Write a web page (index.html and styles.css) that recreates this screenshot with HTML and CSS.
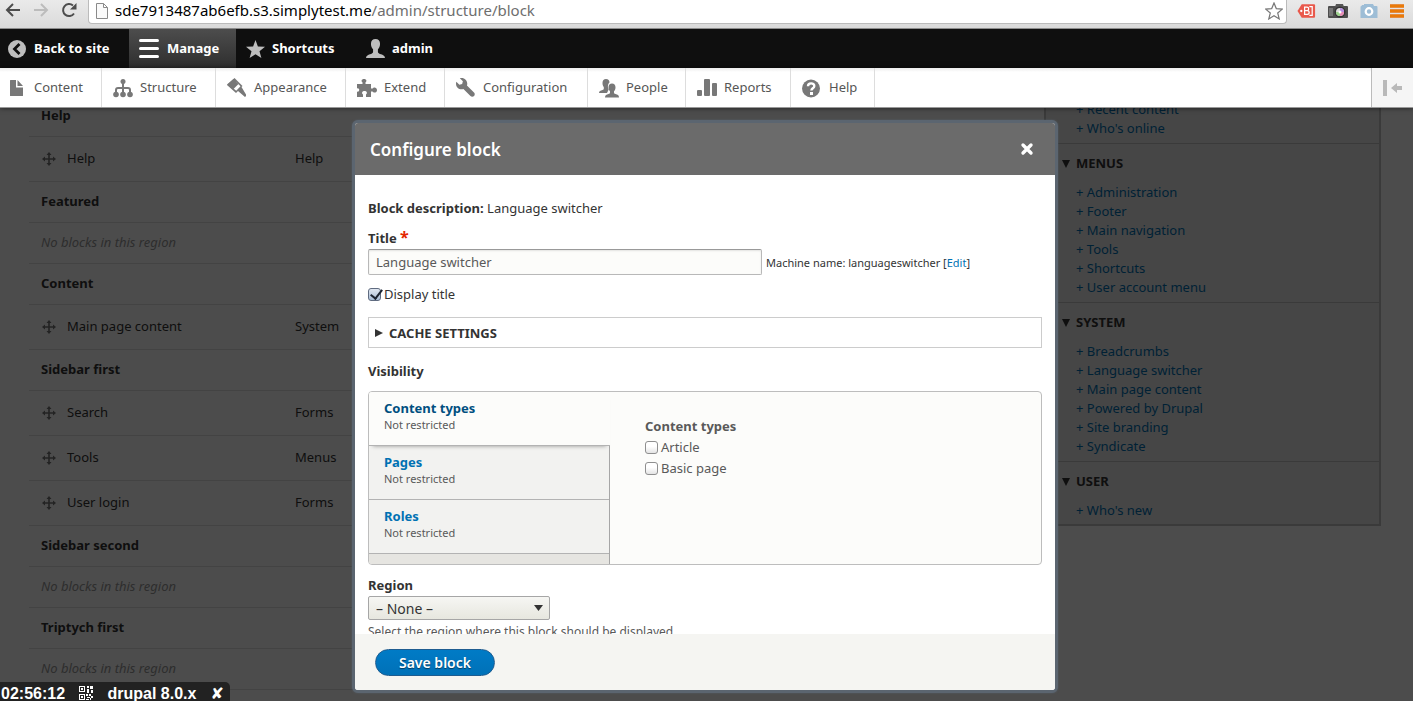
FILE: index.html
```
<!DOCTYPE html>
<html lang="en">
<head>
    <meta charset="UTF-8">
    <meta name="viewport" content="width=device-width, initial-scale=1.0">
    <title>Block layout | Drupal 8</title>
    <link rel="stylesheet" href="styles.css">
</head>
<body>
    <!-- Shared icons -->
    <svg class="sprite" aria-hidden="true">
        <symbol id="move" viewBox="0 0 14 14">
            <path d="M7 0l2.500 3H7.800v3.200H11V4.500L14 7l-3 2.500V7.800H7.800V11h1.700L7 14l-2.500-3h1.700V7.800H3v1.700L0 7l3-2.500v1.700h3.200V3H4.500z"/>
        </symbol>
        <symbol id="person" viewBox="0 0 18 18">
            <path d="M9 0C6.300 0 4.700 1.800 4.700 4.500c0 2.300.800 4.200 2 5.300v2.600c0 .900-.700 1.300-1.900 1.700C2 14.800 0 15.600 0 18h18c0-2.400-2-3.200-4.800-3.900-1.200-.400-1.900-.800-1.900-1.700V9.800c1.200-1.100 2-3 2-5.300C13.300 1.800 11.700 0 9 0z"/>
        </symbol>
    </svg>

    <!-- Browser bar -->
    <div class="browser">
        <div class="browser-nav">
            <button type="button" aria-label="Back"><svg width="16" height="16" viewBox="0 0 16 16" class="dark"><path d="M15 8H2M8 2L2 8l6 6"/></svg></button>
            <button type="button" aria-label="Forward"><svg width="16" height="16" viewBox="0 0 16 16" class="faded"><path d="M1 8h13M8 2l6 6-6 6"/></svg></button>
            <button type="button" aria-label="Reload"><svg width="16" height="16" viewBox="0 0 16 16" class="dark"><path d="M13 11.500A6 6 0 1 1 12 3.500"/><path d="M15.500 1v6.500H9z" class="solid"/></svg></button>
        </div>
        <div class="address">
            <svg width="12" height="16" viewBox="0 0 12 16"><path d="M.5.5h7l4 4v11H.5zM7.500.5v4h4" fill="#fafafa" stroke="#8a8a8a"/></svg>
            <div class="url">sde7913487ab6efb.s3.simplytest.me<span>/admin/structure/block</span></div>
            <svg width="18" height="18" viewBox="0 0 18 18"><path d="M9 1l2.300 5.600 6 .5-4.600 3.900 1.500 5.900L9 13.700l-5.200 3.200L5.300 11 .7 7.100l6-.5z" fill="#fff" stroke="#777" stroke-width="1.200"/></svg>
        </div>
        <div class="extensions">
            <svg width="19" height="16" viewBox="0 0 20 16"><path d="M5 1h13a1 1 0 0 1 1 1v12a1 1 0 0 1-1 1H5L.5 8z" fill="#e9584b"/><path d="M8 4h2.500a1.800 1.800 0 0 1 0 3.600H8zM8 7.600h2.800a2 2 0 0 1 0 4H8zM13 3.500h3v9h-3" fill="none" stroke="#fff" stroke-width="1.300"/><circle cx="4.500" cy="8" r="1.200" fill="#fff"/></svg>
            <svg width="20" height="16" viewBox="0 0 20 16"><rect x="0" y="3" width="20" height="12" rx="1" fill="#4d4d4d"/><path d="M8 1h7l1 3H7z" fill="#555"/><path d="M1 5h4v8H1z" fill="#777"/><circle cx="12" cy="9" r="5.500" fill="#333"/><circle cx="12" cy="9" r="4" fill="#ddd"/><path d="M12 9V5a4 4 0 0 1 4 4z" fill="#b58be0"/><path d="M12 9h4a4 4 0 0 1-4 4z" fill="#e88bb4"/><path d="M12 9v4a4 4 0 0 1-4-4z" fill="#9bd38a"/><circle cx="12" cy="9" r="1.500" fill="#fff"/></svg>
            <svg width="18" height="16" viewBox="0 0 18 16"><path d="M2 2h2V1h3v1-1h6l1 2h2.500a1 1 0 0 1 1 1v11h-17V4a1 1 0 0 1 1-1z" fill="#9dbdd6"/><circle cx="9" cy="8.500" r="3.300" fill="none" stroke="#fff" stroke-width="2.200"/></svg>
            <svg width="14" height="14" viewBox="0 0 14 14"><path d="M0 2h14M0 7h14M0 12h14" stroke="#f59a00" stroke-width="3"/><path d="M0 1h14M0 3h14M0 6h14M0 8h14M0 11h14M0 13h14" stroke="#dd5a10" stroke-width="1"/></svg>
        </div>
    </div>

    <!-- Admin toolbar -->
    <nav class="toolbar">
        <a href="#" class="tab-back">
            <svg width="18" height="18" viewBox="0 0 18 18"><circle cx="9" cy="9" r="9"/><path d="M11.500 4L6.500 9l5 5" fill="none" stroke="#0f0f0f" stroke-width="2.800"/></svg>
            Back to site
        </a>
        <a href="#" class="tab-manage active">
            <svg width="20" height="19" viewBox="0 0 20 19"><path d="M1.500 1.500h17M1.500 9.500h17M1.500 17.500h17" stroke="#fff" stroke-width="3" stroke-linecap="round"/></svg>
            Manage
        </a>
        <a href="#" class="tab-shortcuts">
            <svg width="19" height="18" viewBox="0 0 19 18"><path d="M9.500 0l2.400 6.400 7.100.4-5.500 4.500L15.400 18l-5.900-3.800L3.600 18l1.900-6.700L0 6.800l7.100-.4z"/></svg>
            Shortcuts
        </a>
        <a href="#" class="tab-user">
            <svg width="19" height="19"><use href="#person"/></svg>
            admin
        </a>
    </nav>

    <!-- Menu tray -->
    <nav class="tray">
        <a href="#" class="m-content"><svg width="20" height="20" viewBox="0 0 20 20"><path d="M0 2.500A.5.5 0 0 1 .5 2H6v7.500h7v8a.5.5 0 0 1-.5.5H.5a.5.5 0 0 1-.5-.5zM7.500 2L13 8H7.500z"/></svg>Content</a>
        <a href="#" class="m-structure"><svg width="20" height="20" viewBox="0 0 20 20"><circle cx="10" cy="3.500" r="2.500"/><path d="M10 5v11M3 16v-4q0-2 2-2h10q2 0 2 2v4" fill="none" stroke="#787878" stroke-width="2"/><circle cx="3" cy="16.500" r="2.800"/><circle cx="10" cy="16.500" r="2.800"/><circle cx="17" cy="16.500" r="2.800"/></svg>Structure</a>
        <a href="#" class="m-appearance"><svg width="20" height="20" viewBox="0 0 20 20"><path d="M7.500 0l8 8-1 1 4.500 7.500q.5 1.500-1 2.500L11 13l-2 2L0 7z"/><path d="M9 3.800l4.500 4.500-4.300 4.400-5-4.300z" fill="#fff"/><path d="M6.500 1l5 5-5.500 5.500L0 6.500z"/></svg>Appearance</a>
        <a href="#" class="m-extend"><svg width="20" height="20" viewBox="0 0 20 20"><path d="M0 6h5.500V4.300C4 3.400 4.300 1 7 1s3 2.400 1.500 3.300V6H14v4.500h1.600c.9-1.800 4.400-1.500 4.400 1.500s-3.500 3.300-4.400 1.500H14V19H9v-2.500c1.600-1 1.200-3.500-1.500-3.500S4.400 15.500 6 16.500V19H0v-5.500c3 1.200 3-4 0-3z"/></svg>Extend</a>
        <a href="#" class="m-config"><svg width="20" height="20" viewBox="0 0 16 16"><path d="M14.416 11.586l-.01-.009-5.656-5.656c.15-.449.252-.921.252-1.421 0-2.485-2.016-4.500-4.502-4.500-.505 0-.981.102-1.434.255l2.431 2.431-.588 2.196-2.196.588L.268 3.025C.106 3.489 0 3.981 0 4.500 0 6.986 2.014 9 4.500 9c.5 0 .972-.102 1.421-.251l5.667 5.665c.781.781 2.047.781 2.828 0s.781-2.047 0-2.828z"/></svg>Configuration</a>
        <a href="#" class="m-people"><svg width="20" height="20" viewBox="0 0 20 20"><path d="M7 1c2.300 0 3.500 1.500 3.500 3.500-1.500 1.200-2.200 4.500-.8 7l-1.700 3.500H0c0-2 1.500-2.500 3.500-3 .8-.2 1.300-.6 1.300-1.300V9C3.900 8 3.500 6.600 3.500 5 3.500 2.500 4.800 1 7 1z"/><path d="M13 5.500c-2.200 0-3.500 1.500-3.500 3.700 0 1.600.5 3 1.500 4v1.500c0 .7-.5 1-1.500 1.300-2 .5-3.500 1-3.500 3.500h14c0-2.500-1.500-3-3.500-3.500-1-.3-1.500-.6-1.500-1.300v-1.500c1-1 1.500-2.400 1.500-4 0-2.200-1.300-3.700-3.500-3.700z"/></svg>People</a>
        <a href="#" class="m-reports"><svg width="20" height="20" viewBox="0 0 20 20"><rect x="0" y="12" width="5" height="6" rx="1"/><rect x="7" y="1" width="6" height="17" rx="1"/><rect x="15" y="5" width="5" height="13" rx="1"/></svg>Reports</a>
        <a href="#" class="m-help"><svg width="20" height="20" viewBox="0 0 20 20"><circle cx="9" cy="10.500" r="9"/><path d="M6 8.300C6 4.300 12.300 4.500 12.300 8c0 2.300-2.900 2.300-2.900 4.500" fill="none" stroke="#fff" stroke-width="2.400"/><rect x="8" y="14" width="3" height="3" fill="#fff"/></svg>Help</a>
        <button type="button" class="orientation" aria-label="Vertical orientation"><svg width="20" height="16" viewBox="0 0 20 16"><path d="M0 0h4v16H0zM8 8l6-5v3h5v4h-5v3z"/></svg></button>
    </nav>

    <div class="page">
        <!-- Block layout page -->
        <main class="layout">
            <table class="blocks">
                <tr class="region"><th colspan="2">Help</th></tr>
                <tr><td><svg width="14" height="14"><use href="#move"/></svg>Help</td><td>Help</td></tr>
                <tr class="region"><th colspan="2">Featured</th></tr>
                <tr class="empty"><td colspan="2">No blocks in this region</td></tr>
                <tr class="region"><th colspan="2">Content</th></tr>
                <tr><td><svg width="14" height="14"><use href="#move"/></svg>Main page content</td><td>System</td></tr>
                <tr class="region"><th colspan="2">Sidebar first</th></tr>
                <tr><td><svg width="14" height="14"><use href="#move"/></svg>Search</td><td>Forms</td></tr>
                <tr><td><svg width="14" height="14"><use href="#move"/></svg>Tools</td><td>Menus</td></tr>
                <tr><td><svg width="14" height="14"><use href="#move"/></svg>User login</td><td>Forms</td></tr>
                <tr class="region"><th colspan="2">Sidebar second</th></tr>
                <tr class="empty"><td colspan="2">No blocks in this region</td></tr>
                <tr class="region"><th colspan="2">Triptych first</th></tr>
                <tr class="empty"><td colspan="2">No blocks in this region</td></tr>
            </table>
            <aside class="place-blocks">
                <ul>
                    <li><a href="#">+ Recent content</a></li>
                    <li><a href="#">+ Who's online</a></li>
                </ul>
                <details open>
                    <summary>MENUS</summary>
                    <ul>
                        <li><a href="#">+ Administration</a></li>
                        <li><a href="#">+ Footer</a></li>
                        <li><a href="#">+ Main navigation</a></li>
                        <li><a href="#">+ Tools</a></li>
                        <li><a href="#">+ Shortcuts</a></li>
                        <li><a href="#">+ User account menu</a></li>
                    </ul>
                </details>
                <details open>
                    <summary>SYSTEM</summary>
                    <ul>
                        <li><a href="#">+ Breadcrumbs</a></li>
                        <li><a href="#">+ Language switcher</a></li>
                        <li><a href="#">+ Main page content</a></li>
                        <li><a href="#">+ Powered by Drupal</a></li>
                        <li><a href="#">+ Site branding</a></li>
                        <li><a href="#">+ Syndicate</a></li>
                    </ul>
                </details>
                <details open>
                    <summary>USER</summary>
                    <ul>
                        <li><a href="#">+ Who's new</a></li>
                    </ul>
                </details>
            </aside>
        </main>

        <!-- Modal -->
        <div class="overlay">
            <form class="dialog" role="dialog" aria-labelledby="dialog-title">
                <div class="dialog-header">
                    <h1 id="dialog-title">Configure block</h1>
                    <button type="button" aria-label="Close"><svg width="14" height="14" viewBox="0 0 14 14"><path d="M3 3l8 8M11 3l-8 8" stroke="#fff" stroke-width="3.400" stroke-linecap="round"/></svg></button>
                </div>
                <div class="dialog-content">
                    <p class="description"><strong>Block description:</strong> Language switcher</p>
                    <label class="title-label" for="title">Title <span class="required">*</span></label>
                    <div class="title-row">
                        <input type="text" id="title" value="Language switcher">
                        <span>Machine name: languageswitcher [<a href="#">Edit</a>]</span>
                    </div>
                    <div class="check display-title">
                        <input type="checkbox" id="display" checked>
                        <label for="display">Display title</label>
                    </div>
                    <details class="cache">
                        <summary>CACHE SETTINGS</summary>
                    </details>
                    <h2>Visibility</h2>
                    <div class="vertical-tabs">
                        <div class="tabs-menu">
                            <a href="#" class="selected"><strong>Content types</strong><span>Not restricted</span></a>
                            <a href="#"><strong>Pages</strong><span>Not restricted</span></a>
                            <a href="#"><strong>Roles</strong><span>Not restricted</span></a>
                        </div>
                        <fieldset class="tabs-pane">
                            <legend>Content types</legend>
                            <div class="check">
                                <input type="checkbox" id="article">
                                <label for="article">Article</label>
                            </div>
                            <div class="check">
                                <input type="checkbox" id="basic-page">
                                <label for="basic-page">Basic page</label>
                            </div>
                        </fieldset>
                    </div>
                    <label class="region-label" for="region">Region</label>
                    <select id="region">
                        <option>– None –</option>
                    </select>
                    <p class="help">Select the region where this block should be displayed.</p>
                </div>
                <div class="dialog-footer">
                    <button type="submit">Save block</button>
                </div>
            </form>
        </div>
    </div>

    <!-- Sandbox timer -->
    <div class="timer">
        <span>02:56:12</span>
        <svg width="14" height="14" viewBox="0 0 14 14" shape-rendering="crispEdges"><path d="M0 0h6v6H0zM8 0h2v2H8zM11 0h3v3h-3zM8 3h2v4H8zM12 4h2v3h-2zM0 8h6v6H0zM7 8h2v2H7zM10 8h2v2h-2zM12 10h2v2h-2zM8 11h3v1H8zM7 13h3v1H7zM11 12h1v2h-1z" fill="#fff"/><path d="M1 1h4v4H1zM1 9h4v4H1z" fill="#222"/><path d="M2 2h2v2H2zM2 10h2v2H2z" fill="#fff"/></svg>
        <span>drupal 8.0.x</span>
        <span>✘</span>
    </div>
</body>
</html>
```
FILE: styles.css
```
/* General */
* { box-sizing: border-box; }
body {
    margin: 0;
    height: 100vh;
    display: flex;
    flex-direction: column;
    overflow: hidden;
    font-family: "Lucida Grande", "Noto Sans", sans-serif;
    font-size: 13px;
    line-height: 19px;
    color: #333;
}
a { color: #0071b3; text-decoration: none; }
button { font-family: inherit; cursor: pointer; }
svg { flex: none; }
.sprite { display: none; }

/* Browser bar */
.browser {
    height: 29px;
    flex: none;
    display: flex;
    padding-bottom: 4px;
    background: linear-gradient(#eaeaea, #dadada);
    border-bottom: 1px solid #8c8c8c;
}
.browser-nav { display: flex; gap: 12px; padding: 0 11px 0 5px; }
.browser-nav button { width: 16px; padding: 0; border: none; background: none; }
.browser-nav svg { display: block; margin-top: -4px; fill: none; stroke-width: 2px; }
.browser-nav .dark { stroke: #4d4d4d; }
.browser-nav .faded { stroke: #bcbcbc; }
.browser-nav .solid { fill: #4d4d4d; stroke: none; }
.address {
    flex: 1;
    display: flex;
    align-items: center;
    gap: 7px;
    padding: 0 3px 2px 7px;
    background: #fff;
    border: 1px solid #bbb;
    border-top: none;
    border-radius: 0 0 4px 4px;
}
.url { flex: 1; font-size: 15px; color: #000; }
.url span { color: #6e6e6e; }
.extensions { display: flex; align-items: center; gap: 12px; padding: 0 9px 3px 10px; }

/* Toolbar */
.toolbar { height: 39px; flex: none; display: flex; background: #0f0f0f; }
.toolbar a {
    display: flex;
    align-items: center;
    gap: 7px;
    padding: 0 10px;
    color: #fff;
    font-weight: bold;
    white-space: nowrap;
}
.toolbar svg { fill: #bebebe; }
.toolbar .active { background: linear-gradient(#4d4d4d, #2e2e2e); }
.toolbar .tab-back { width: 129px; padding-left: 8px; gap: 8px; }
.toolbar .tab-manage { width: 107px; gap: 8px; }
.toolbar .tab-shortcuts { width: 120px; }

/* Tray */
.tray {
    position: relative;
    z-index: 2;
    height: 40px;
    flex: none;
    display: flex;
    background: linear-gradient(#ececec, #fff 4px);
    border-bottom: 1px solid #999;
    box-shadow: 0 0 5px rgba(0, 0, 0, 0.6);
}
.tray a {
    display: flex;
    align-items: center;
    gap: 7px;
    padding: 0 10px 0 11px;
    border-right: 1px solid #ddd;
    color: #565656;
    white-space: nowrap;
}
.tray svg { fill: #787878; }
.m-content { width: 102px; }
.tray .m-content { padding-left: 10px; gap: 4px; }
.m-structure { width: 114px; }
.m-appearance { width: 130px; }
.m-extend { width: 99px; }
.m-config { width: 143px; }
.m-people { width: 98px; }
.m-reports { width: 105px; }
.m-help { width: 84px; }
.orientation {
    width: 42px;
    margin-left: auto;
    padding: 0 0 0 11px;
    background: #f5f5f5;
    border: none;
    border-left: 1px solid #bbb;
}
.orientation svg { display: block; fill: #b9b9b9; }

/* Block layout page, scrolled so that the first rows are under the tray */
.page { position: relative; flex: 1; min-height: 0; overflow: hidden; background: #fff; }
.layout { display: flex; align-items: flex-start; gap: 12px; margin-top: -13px; padding: 0 32px 0 29px; }
.blocks { flex: 1; border-collapse: collapse; text-align: left; }
.blocks th, .blocks td { height: 45px; padding: 0 12px; border-bottom: 1px solid #e0e0e0; }
.blocks td:first-child { width: 254px; white-space: nowrap; }
.blocks .region th, .blocks .empty td { height: 41px; }
.blocks .empty td { color: #999; font-style: italic; }
.blocks svg { margin: 0 11px 0 1px; vertical-align: -3px; fill: #777; }
.place-blocks {
    width: 337px;
    padding-top: 5px;
    background: #ebeaea;
    border: 2px solid #c4c4c4;
    border-top: none;
}
.place-blocks ul { margin: 0; padding: 0 0 5px 30px; list-style: none; }
.place-blocks details { border-top: 1px solid #c4c4c4; }
.place-blocks details:last-child ul { padding-bottom: 4px; }
.place-blocks summary { height: 39px; padding-left: 16px; }

summary { display: flex; align-items: center; gap: 6px; font-weight: bold; list-style: none; cursor: pointer; }
summary::before {
    content: "";
    border: 4px solid transparent;
    border-left: 8px solid currentColor;
    border-right: none;
}
details[open] > summary::before {
    border: 4px solid transparent;
    border-top: 8px solid currentColor;
    border-bottom: none;
}

/* Modal */
.overlay {
    position: absolute;
    inset: 0;
    display: flex;
    justify-content: center;
    padding: 12px 3px 8px 0;
    background: rgba(0, 0, 0, 0.7);
}
.dialog {
    width: 706px;
    display: flex;
    flex-direction: column;
    overflow: hidden;
    border: 3px solid #5b6570;
    border-radius: 6px;
    box-shadow: 0 0 2px #56606a;
    background: #fff;
}
.dialog-header {
    height: 52px;
    flex: none;
    display: flex;
    align-items: center;
    justify-content: space-between;
    padding: 0 21px 0 15px;
    background: #6b6b6b;
}
.dialog-header h1 { margin: 0; font-size: 17px; font-weight: 600; color: #fff; }
.dialog-header button { padding: 0; border: none; background: none; }
.dialog-header svg { display: block; }
.dialog-content { flex: 1; min-height: 0; overflow: hidden; padding: 24px 13px 0; }
.description { margin: 0 0 10px; }
.title-label, .region-label { display: block; font-weight: bold; line-height: 20px; }
.title-label { padding-bottom: 1px; }
.required { color: #e32700; font-size: 16px; line-height: 16px; }
.title-row { display: flex; align-items: center; gap: 4px; font-size: 11px; }
.title-row input {
    width: 394px;
    height: 26px;
    padding: 0 7px;
    border: 1px solid #b8b8b8;
    border-top-color: #999;
    border-radius: 2px;
    background: #fcfcfa;
    box-shadow: inset 0 1px 2px rgba(0, 0, 0, 0.1);
    font: 13px "Lucida Grande", "Noto Sans", sans-serif;
    color: #595959;
}
.check { display: flex; align-items: center; gap: 3px; line-height: 21px; }
.check input {
    appearance: none;
    width: 13px;
    height: 13px;
    margin: 0;
    border: 1px solid #8f8f8f;
    border-radius: 3px;
    background: linear-gradient(#fff 40%, #e4e4e4);
}
.display-title { margin: 9px 0 12px; }
.check input:checked { position: relative; background: linear-gradient(#dfe6f0, #a9bdd6); border-color: #5f6b80; }
.check input:checked::after {
    content: "";
    position: absolute;
    left: 4px;
    top: -2px;
    width: 5px;
    height: 10px;
    border: solid #1c2430;
    border-width: 0 2px 2px 0;
    transform: rotate(38deg);
}
.cache { border: 1px solid #ccc; }
.cache summary { height: 29px; padding: 1px 0 0 6px; }
.dialog-content h2 { margin: 14px 0 10px; font-size: 13px; line-height: 19px; }
.vertical-tabs {
    display: flex;
    overflow: hidden;
    border: 1px solid #bdbdbd;
    border-radius: 4px;
    background: #fcfcfa;
}
.tabs-menu {
    width: 241px;
    padding-bottom: 10px;
    background: #e6e5e1;
    border-right: 1px solid #a6a6a6;
}
.tabs-menu a {
    display: flex;
    flex-direction: column;
    height: 54px;
    padding: 8px 15px 0;
    line-height: 17px;
    background: #f2f2f0;
    border-bottom: 1px solid #b3b3b3;
}
.tabs-menu span { font-size: 11px; line-height: 16px; color: #595959; }
.tabs-menu .selected {
    position: relative;
    width: 241px;
    background: #fcfcfa;
    color: #004f80;
    box-shadow: 0 4px 4px -4px rgba(0, 0, 0, 0.4);
}
.tabs-pane { flex: 1; margin: 0; padding: 25px 35px 0; border: none; color: #595959; }
.tabs-pane legend { float: left; width: 100%; padding: 0 0 1px; font-weight: bold; }
.tabs-pane .check { clear: both; }
.region-label { margin-top: 10px; padding-bottom: 1px; }
select {
    appearance: none;
    display: block;
    width: 182px;
    height: 24px;
    padding: 0 7px;
    border: 1px solid #a6a6a6;
    border-radius: 2px;
    background:
        url("data:image/svg+xml,%3Csvg xmlns='http://www.w3.org/2000/svg' width='9' height='6'%3E%3Cpath d='M0 0h9L4.5 6z' fill='%23333'/%3E%3C/svg%3E") right 6px center no-repeat,
        linear-gradient(#f6f6f3, #e7e7df);
    font: 14px "Lucida Grande", "Noto Sans", sans-serif;
    color: #333;
}
.help { margin: 2px 0 0; font-size: 12px; color: #595959; }
.dialog-footer { height: 56px; flex: none; padding: 15px 20px 0; background: #f5f5f2; }
.dialog-footer button {
    width: 120px;
    height: 27px;
    padding: 0;
    border: 1px solid #1e5c90;
    border-radius: 14px;
    background: linear-gradient(#007bc6, #0071b8);
    color: #fff;
    font-size: 14px;
    font-weight: 600;
    text-shadow: 0 1px 1px rgba(0, 0, 0, 0.5);
}

/* Sandbox timer */
.timer {
    position: absolute;
    left: 0;
    bottom: 0;
    z-index: 3;
    width: 230px;
    height: 19px;
    display: flex;
    align-items: center;
    justify-content: space-between;
    padding: 3px 6px 0 1px;
    background: #222;
    border-radius: 0 5px 0 0;
    color: #fff;
    font-family: "Liberation Sans", "DejaVu Sans", sans-serif;
    font-size: 16px;
    font-weight: bold;
    white-space: nowrap;
}
```
